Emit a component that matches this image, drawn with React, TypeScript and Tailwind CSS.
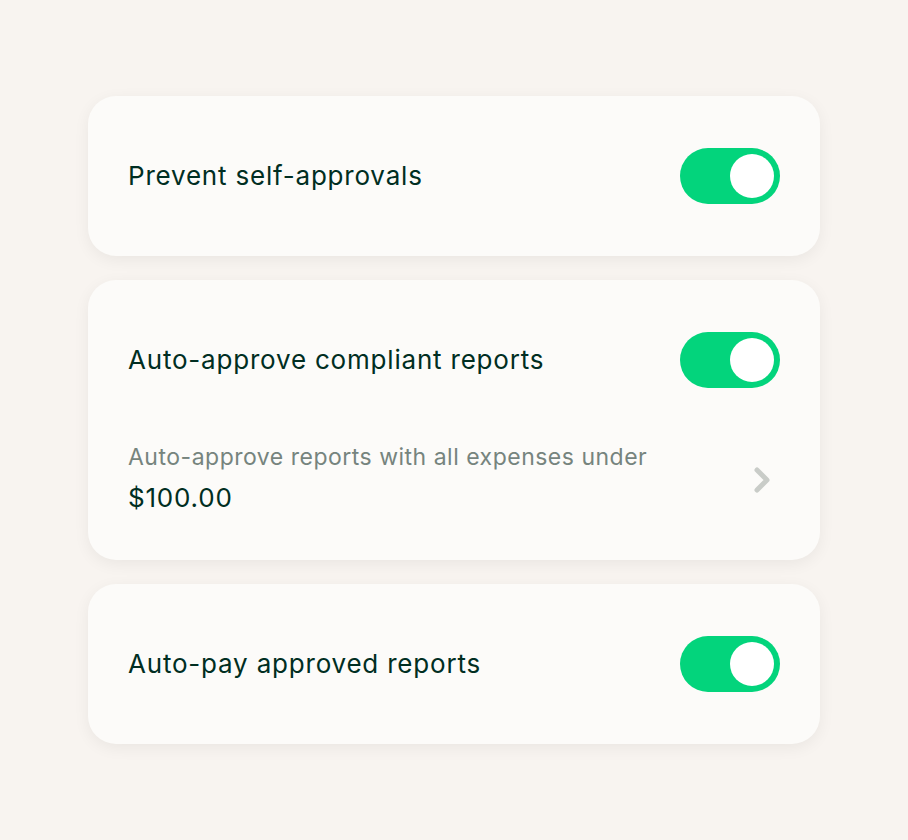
import React from "react";

function Toggle() {
  return (
    <div className="w-[100px] h-[56px] rounded-full bg-[#03d47c] flex items-center justify-end pr-[6px] shrink-0">
      <div className="w-[44px] h-[44px] rounded-full bg-white" />
    </div>
  );
}

function Chevron() {
  return (
    <svg width="20" height="28" viewBox="0 0 20 28" className="shrink-0">
      <path d="M5 4 L15 14 L5 24" fill="none" stroke="#c9ccc8" strokeWidth="5" strokeLinecap="round" strokeLinejoin="round" />
    </svg>
  );
}

export default function App() {
  return (
    <div className="min-h-[840px] w-full bg-[#f8f4f0] pt-[96px] px-[88px]" style={{ fontFamily: "Inter, 'Noto Sans', sans-serif" }}>
      <div className="flex flex-col gap-[24px]">
        <div className="bg-[#fcfbf9] rounded-[28px] px-[40px] py-[52px] flex items-center justify-between shadow-[0_4px_16px_rgba(0,0,0,0.06)]">
          <span className="text-[26px] leading-[32px] tracking-[0.8px] text-[#002e22]">Prevent self-approvals</span>
          <Toggle />
        </div>
        <div className="bg-[#fcfbf9] rounded-[28px] px-[40px] pt-[52px] pb-[42px] flex flex-col shadow-[0_4px_16px_rgba(0,0,0,0.06)]">
          <div className="flex items-center justify-between">
            <span className="text-[26px] leading-[32px] tracking-[0.8px] text-[#002e22]">Auto-approve compliant reports</span>
            <Toggle />
          </div>
          <div className="flex items-center justify-between mt-[54px] pr-[8px]">
            <div className="flex flex-col">
              <span className="text-[23px] leading-[30px] tracking-[0.5px] text-[#76847e]">Auto-approve reports with all expenses under</span>
              <span className="text-[26px] leading-[40px] tracking-[0.8px] mt-[6px] text-[#002e22]">$100.00</span>
            </div>
            <Chevron />
          </div>
        </div>
        <div className="bg-[#fcfbf9] rounded-[28px] px-[40px] py-[52px] flex items-center justify-between shadow-[0_4px_16px_rgba(0,0,0,0.06)]">
          <span className="text-[26px] leading-[32px] tracking-[0.8px] text-[#002e22]">Auto-pay approved reports</span>
          <Toggle />
        </div>
      </div>
    </div>
  );
}
